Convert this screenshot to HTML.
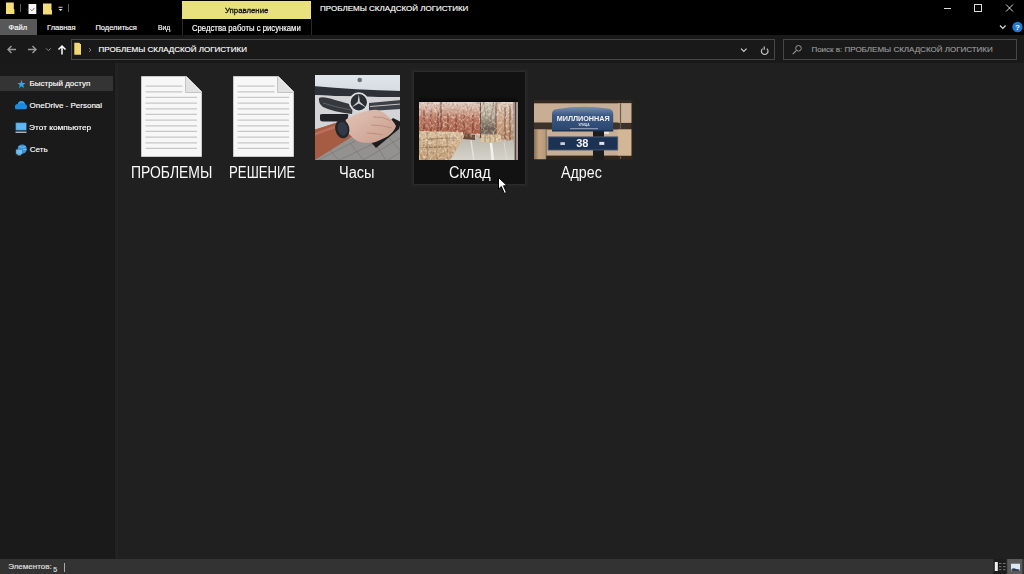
<!DOCTYPE html>
<html><head><meta charset="utf-8">
<style>
*{margin:0;padding:0;box-sizing:border-box}
html,body{width:1024px;height:574px;overflow:hidden;background:#202020;font-family:"Liberation Sans",sans-serif;color:#fff}
.a{position:absolute}
.t{position:absolute;white-space:nowrap;line-height:1;transform-origin:0 0}
svg{position:absolute;overflow:visible}
#title{left:0;top:0;width:1024px;height:35px;background:#000}
#addr{left:0;top:35px;width:1024px;height:28px;background:#191919}
#nav{left:0;top:63px;width:114px;height:496px;background:#1a1a1a}
#navsep{left:114px;top:63px;width:1px;height:496px;background:#171717}
#navsep2{left:115px;top:63px;width:2.5px;height:496px;background:#232323}
#content{left:118px;top:63px;width:906px;height:496px;background:#202020}
#status{left:0;top:559px;width:1024px;height:15px;background:#333}
.s8{font-size:8px}
.t{-webkit-text-stroke:0.15px currentColor}
.lbl{-webkit-text-stroke:0}
.lbl{font-size:16px;color:#fafafa;top:165.2px}
</style></head><body>
<div class="a" id="title"></div>
<div class="a" id="addr"></div>
<div class="a" id="nav"></div>
<div class="a" id="navsep"></div>
<div class="a" id="navsep2"></div>
<div class="a" id="content"></div>

<div class="a" id="status"></div>

<!-- quick access toolbar -->
<svg style="left:0;top:0" width="80" height="18">
  <path d="M6 2.5h7.8v6.5l0.6 0.3v4.7H6z" fill="#f4dc78"/>
  <rect x="20" y="4" width="1" height="8" fill="#5a5a5a"/>
  <rect x="28.5" y="4" width="7.8" height="10" fill="#f6f4f6"/>
  <path d="M30.3 9.3l1.6 1.6 2.6-3" stroke="#8a7862" stroke-width="1" fill="none"/>
  <path d="M43 3.5h8.5v6.5l0.5 0.3v4.2H43z" fill="#f4dc78"/>
  <rect x="58.5" y="6.8" width="4" height="1" fill="#ccc"/>
  <path d="M58.5 9h4l-2 2z" fill="#eee"/>
  <rect x="68" y="4" width="1" height="8" fill="#5a5a5a"/>
</svg>

<!-- Управление tab -->
<div class="a" style="left:182px;top:1px;width:129px;height:18px;background:#e8e17e"></div>
<div class="t s8" style="left:224.5px;top:6.8px;color:#111;transform:scaleX(0.975);-webkit-text-stroke:0.3px #111">Управление</div>
<div class="t s8" style="left:320px;top:5.3px;color:#fff">ПРОБЛЕМЫ СКЛАДСКОЙ ЛОГИСТИКИ</div>

<!-- window controls -->
<svg style="left:930px;top:0" width="94" height="35">
  <rect x="14" y="8" width="7" height="1" fill="#ddd"/>
  <rect x="44.5" y="4.5" width="7" height="7" fill="none" stroke="#ddd" stroke-width="1"/>
  <path d="M76 4.5l7 7M83 4.5l-7 7" stroke="#ddd" stroke-width="1"/>
  <path d="M70 25.5l2.8 2.8 2.8-2.8" stroke="#ddd" stroke-width="1.2" fill="none"/>
  <circle cx="87.5" cy="27" r="5.2" fill="#1f78d1"/>
  <text x="87.5" y="30" font-size="8" font-weight="bold" fill="#fff" text-anchor="middle" font-family="Liberation Sans">?</text>
</svg>

<!-- ribbon tabs -->
<div class="a" style="left:0;top:19px;width:37px;height:16px;background:#585858"></div>
<div class="t" style="left:8.6px;top:24.2px;font-size:7.5px;color:#fff">Файл</div>
<div class="t" style="left:47px;top:24.2px;font-size:7.5px;color:#fff">Главная</div>
<div class="t" style="left:95.4px;top:24.2px;font-size:7.5px;color:#fff">Поделиться</div>
<div class="t" style="left:158px;top:24.2px;font-size:7.5px;color:#fff;transform:scaleX(0.9)">Вид</div>
<div class="a" style="left:182px;top:19px;width:1px;height:16px;background:#2a2a2a"></div>
<div class="a" style="left:311px;top:19px;width:1px;height:16px;background:#2a2a2a"></div>
<div class="t" style="left:192px;top:24px;font-size:8.3px;color:#fff;transform:scaleX(0.93)">Средства работы с рисунками</div>

<!-- nav arrows -->
<svg style="left:0;top:35px" width="72" height="28">
  <path d="M8 14.5h8M11.5 11l-3.5 3.5 3.5 3.5" stroke="#9a9a9a" stroke-width="1.4" fill="none"/>
  <path d="M28 14.5h8M32.5 11l3.5 3.5-3.5 3.5" stroke="#9a9a9a" stroke-width="1.4" fill="none"/>
  <path d="M46 13.3l2.4 2.4 2.4-2.4" stroke="#8a8a8a" stroke-width="1" fill="none"/>
  <path d="M62 11v8.5M58.5 14.5l3.5-3.5 3.5 3.5" stroke="#fff" stroke-width="1.5" fill="none"/>
</svg>

<!-- address box -->
<div class="a" style="left:71px;top:39px;width:704px;height:21px;border:1px solid #474747"></div>
<svg style="left:71px;top:39px" width="704" height="21">
  <path d="M3.3 3.7h5l1 1.2h0.7v10.8H3.3z" fill="#f2d872"/>
  <path d="M18 9l2 2-2 2" stroke="#777" stroke-width="1" fill="none"/>
  <path d="M670 9.6l2.8 2.8 2.8-2.8" stroke="#ccc" stroke-width="1.2" fill="none"/>
  <path d="M691.6 9.6a3.3 3.3 0 1 0 4.2 0" stroke="#c4c4c4" stroke-width="1.2" fill="none"/>
  <path d="M693.2 7.5v3.2" stroke="#c4c4c4" stroke-width="1.2"/>
</svg>
<div class="t s8" style="left:98.6px;top:45.8px;color:#fff">ПРОБЛЕМЫ СКЛАДСКОЙ ЛОГИСТИКИ</div>
<!-- search box -->
<div class="a" style="left:783px;top:39px;width:234px;height:21px;border:1px solid #474747"></div>
<svg style="left:783px;top:39px" width="234" height="21">
  <circle cx="15.5" cy="9.3" r="2.8" stroke="#999" stroke-width="1" fill="none"/>
  <path d="M13.5 11.3l-3.8 3.8" stroke="#999" stroke-width="1.1"/>
</svg>
<div class="t s8" style="left:811.4px;top:45.6px;color:#9a9a9a">Поиск в: ПРОБЛЕМЫ СКЛАДСКОЙ ЛОГИСТИКИ</div>

<!-- nav pane -->
<div class="a" style="left:0;top:76px;width:113px;height:15px;background:#343434"></div>
<svg style="left:0;top:70px" width="30" height="90">
  <path d="M21.5 10l1.1 2.9 3 .1-2.4 1.9.9 3-2.6-1.7-2.6 1.7.9-3-2.4-1.9 3-.1z" fill="#2aa5ee"/>
  <g fill="#1c8ae0"><circle cx="17.6" cy="36.6" r="2.6"/><circle cx="21.4" cy="34.6" r="3.6"/><circle cx="24.3" cy="36.5" r="2.6"/><rect x="15" y="36.5" width="11.7" height="2.7" rx="1.3"/></g><path d="M18.5 33.5a3.6 3.6 0 0 1 6 0" stroke="#4fb0f0" stroke-width="1" fill="none"/>
  <rect x="15.8" y="52.8" width="10.6" height="7.4" fill="#5eb8ef" stroke="#2a5b80" stroke-width="0.6"/>
  <rect x="15.5" y="61.6" width="11" height="1.2" fill="#cfd8df"/>
  <circle cx="22.2" cy="79" r="4.6" fill="#3b95dc"/>
  <path d="M18.5 76.5c2 1 5 1 7.5 0M18 79.5h8.5" stroke="#8ccaf3" stroke-width="0.7" fill="none"/>
  <rect x="16" y="79.5" width="6.5" height="4.6" fill="#6cc2f2" stroke="#2d6a99" stroke-width="0.5"/>
  <rect x="17.5" y="84.3" width="3.5" height="1" fill="#9fd4f5"/>
</svg>
<div class="t s8" style="left:29.6px;top:79.9px">Быстрый доступ</div>
<div class="t s8" style="left:29.6px;top:101.9px">OneDrive - Personal</div>
<div class="t s8" style="left:29px;top:123.9px;transform:scaleX(1.04)">Этот компьютер</div>
<div class="t s8" style="left:29.8px;top:145.9px">Сеть</div>

<!-- doc icons -->
<svg style="left:141px;top:76px" width="62" height="82" id="doc1">
  <path d="M0.5 0.5H45.5L60.5 15.5V80.5H0.5Z" fill="#f7f7f7" stroke="#c9c9c9" stroke-width="1"/>
  <path d="M44.5 0.5V16.5H60.5" fill="#e2e2e2" stroke="#c4c4c4" stroke-width="1"/>
  <g stroke="#c8c8c8" stroke-width="1.35">
    <path d="M4.5 10.1H41.5M4.5 15.8H41.5"/>
    <path d="M4.5 21.4H56M4.5 27.1H56M4.5 32.8H56M4.5 38.4H56M4.5 44.1H56M4.5 49.8H56M4.5 55.4H56M4.5 61.1H56M4.5 66.8H56M4.5 72.4H56"/>
  </g>
</svg>
<svg style="left:232.5px;top:76px" width="62" height="82">
  <path d="M0.5 0.5H45.5L60.5 15.5V80.5H0.5Z" fill="#f7f7f7" stroke="#c9c9c9" stroke-width="1"/>
  <path d="M44.5 0.5V16.5H60.5" fill="#e2e2e2" stroke="#c4c4c4" stroke-width="1"/>
  <g stroke="#c8c8c8" stroke-width="1.35">
    <path d="M4.5 10.1H41.5M4.5 15.8H41.5"/>
    <path d="M4.5 21.4H56M4.5 27.1H56M4.5 32.8H56M4.5 38.4H56M4.5 44.1H56M4.5 49.8H56M4.5 55.4H56M4.5 61.1H56M4.5 66.8H56M4.5 72.4H56"/>
  </g>
</svg>

<!-- hover box -->
<div class="a" style="left:411px;top:69px;width:117px;height:118px;border:2px solid #242424"></div>
<div class="a" style="left:413px;top:71px;width:113px;height:114px;background:#121212;border:1px solid #2c2c2c"></div>

<div class="a" style="left:419px;top:96px;width:99px;height:6px;background:linear-gradient(#121212,#0a0a0a)"></div>
<!-- Часы image -->
<svg style="left:315px;top:75px" width="85" height="85" viewBox="0 0 85 85"><defs>
    <linearGradient id="hood" x1="0" y1="0" x2="0" y2="1">
      <stop offset="0" stop-color="#e2e7ec"/><stop offset="1" stop-color="#d2d9df"/>
    </linearGradient>
    <linearGradient id="hand" x1="0" y1="0" x2="1" y2="1">
      <stop offset="0" stop-color="#e2c4b6"/><stop offset="1" stop-color="#c99c8a"/>
    </linearGradient>
  <filter id="bl1" x="-5%" y="-5%" width="110%" height="110%"><feGaussianBlur stdDeviation="0.7"/></filter><clipPath id="bl1c"><rect width="85" height="85"/></clipPath></defs><g clip-path="url(#bl1c)"><g filter="url(#bl1)">
  <rect x="-2" y="-2" width="89" height="89" fill="#939290"/>
  <rect x="-2" y="-2" width="89" height="24" fill="url(#hood)"/>
  <circle cx="44.7" cy="5" r="2.3" fill="#6a7078"/>
  <path d="M-2 11 Q40 15 87 16 V22 Q40 22 -2 20Z" fill="#2e3239"/>
  <path d="M-2 20 Q40 22 87 22 V54 H-2Z" fill="#d4d4d6"/>
  <path d="M4 23 Q8 21 20 25 L38 30 L37 39 Q18 37 8 32 Q3 28 4 23Z" fill="#34373e"/>
  <path d="M8 28 Q20 32 36 35" stroke="#6a6c70" stroke-width="0.8" fill="none"/>
  <path d="M54 28 L86 25 V34 L54 36Z" fill="#3c3f46"/>
  <path d="M55 31.5 L86 29" stroke="#c4c4c6" stroke-width="1" fill="none"/>
  <circle cx="43.8" cy="27.3" r="9.1" fill="#2c2f35" stroke="#dcdee0" stroke-width="1.8"/>
  <path d="M43.8 19 L44.9 26.8 L51.2 32.6 L43.8 28.4 L36.4 32.6 L42.7 26.8Z" fill="#cfd1d3"/>
  <path d="M5 40 Q5 39 8 39 H32 Q34 39 33 42 L32 46.5 H8 Q5 46.5 5 44Z" fill="#202227"/>
  <path d="M-2 54 L1.6 84 L34.7 64.5 L58 69.5 L84 51 L87 50 V87 H-2Z" fill="#939290"/>
  <path d="M0 87 L40 66 M20 87 L60 68 M45 87 L87 62 M70 87 L87 76 M15 75 L25 87 M35 68 L50 87 M60 68 L72 87 M72 60 L87 78" stroke="#7e7d7b" stroke-width="0.9"/>
  <path d="M55 66 L61 73 L84 54 L86 47 L78 43Z" fill="#1c1c1e"/>
  <path d="M-2 55 Q8 52 20 48 L31 50 L38 61 L1.6 84 L-2 86Z" fill="#a55b43"/>
  <path d="M-2 60 Q8 56 20 52" stroke="#b9715b" stroke-width="2.5" fill="none"/>
  <path d="M30.6 44.7 Q38 40 49.6 36.4 Q56 34.5 61.2 34.7 Q68 36 72.8 41.4 Q79 46 81 51.3 Q79 57 72.8 61.2 Q64 66 57.9 67.8 H48 Q40 66 36.4 61.2 Q32 58 31.4 53Z" fill="url(#hand)"/>
  <path d="M58 42 Q68 41 76 46 M56 50 Q66 50 77 53 M52 58 Q60 58 68 60" stroke="#bd9080" stroke-width="1" fill="none"/>
  <ellipse cx="27.3" cy="53.8" rx="7" ry="9.6" fill="#23252b" transform="rotate(-12 27.3 53.8)"/>
  <ellipse cx="27.6" cy="53.8" rx="5" ry="7" fill="#333845" transform="rotate(-12 27.3 53.8)"/>
</g></g></svg>

<!-- Склад image -->
<svg style="left:419px;top:102px" width="99" height="58" viewBox="0 0 99 58"><defs>
    <linearGradient id="fl" x1="0" y1="0" x2="0" y2="1">
      <stop offset="0" stop-color="#bcb8ad"/><stop offset="1" stop-color="#d8d5cd"/>
    </linearGradient>
    <linearGradient id="shL" x1="0" y1="0" x2="0" y2="1">
      <stop offset="0" stop-color="#e4d8d0"/><stop offset="0.25" stop-color="#d6b2a0"/><stop offset="0.6" stop-color="#bb735c"/><stop offset="1" stop-color="#a85a44"/>
    </linearGradient>
    <linearGradient id="shR" x1="0" y1="0" x2="0" y2="1">
      <stop offset="0" stop-color="#e2d2c4"/><stop offset="0.5" stop-color="#cfa484"/><stop offset="1" stop-color="#b98660"/>
    </linearGradient>
    <linearGradient id="cor" x1="0" y1="0" x2="0" y2="1">
      <stop offset="0" stop-color="#dcd6c4"/><stop offset="0.4" stop-color="#b8ae9c"/><stop offset="0.75" stop-color="#6a5e52"/><stop offset="1" stop-color="#7a6e60"/>
    </linearGradient>
    <linearGradient id="box" x1="0" y1="0" x2="0" y2="1">
      <stop offset="0" stop-color="#dcc5a2"/><stop offset="1" stop-color="#c29c72"/>
    </linearGradient>
    <filter id="nz" x="0" y="0" width="100%" height="100%">
      <feTurbulence type="fractalNoise" baseFrequency="0.45 0.35" numOctaves="2" seed="7"/>
      <feColorMatrix type="matrix" values="0 0 0 0 1  0 0 0 0 0.96  0 0 0 0 0.92  2.4 0 0 0 -1.1"/>
    </filter>
    <filter id="nz2" x="0" y="0" width="100%" height="100%">
      <feTurbulence type="fractalNoise" baseFrequency="0.5 0.4" numOctaves="2" seed="11"/>
      <feColorMatrix type="matrix" values="0 0 0 0 0.3  0 0 0 0 0.15  0 0 0 0 0.1  0 2.6 0 0 -1.2"/>
    </filter>
  <clipPath id="shc"><path d="M-2 -2 H95 V40 L44 35 L30 60 H-2Z"/></clipPath>
  <filter id="bl2" x="-5%" y="-5%" width="110%" height="110%"><feGaussianBlur stdDeviation="0.5"/></filter><clipPath id="bl2c"><rect width="99" height="58"/></clipPath></defs><g clip-path="url(#bl2c)"><g filter="url(#bl2)">
  <rect x="-2" y="-2" width="103" height="62" fill="#c7b2a2"/>
  <path d="M-2 -2 H62 V32 H-2Z" fill="url(#shL)"/>
  <path d="M61 -2 H78 V36 H61Z" fill="url(#cor)"/>
  <path d="M77 -2 H95 V40 H77Z" fill="url(#shR)"/>
  <rect x="94" y="-2" width="7" height="62" fill="#aa9c96"/>
  <path d="M96.5 -2 V60" stroke="#4e4440" stroke-width="1.2"/>
  <path d="M5 8V31M12 9V31M19 10V31M29 11V31M37 12V31M45 13V31M54 13V32" stroke="#6a3024" stroke-width="1.1" opacity="0.75"/>
  <path d="M22 -2V34" stroke="#4a3028" stroke-width="0.9"/>
  <path d="M61.5 -2V36M77 -2V36M86 6V40M91 4V40" stroke="#5a4238" stroke-width="0.9"/>
  <path d="M64 -2 L68 20 M75 -2 L71 20" stroke="#8a8272" stroke-width="0.8"/>
  <path d="M28 60 L44 35 L95 38 L95 60Z" fill="url(#fl)"/>
  <path d="M72 41 L74 60" stroke="#f2f1ec" stroke-width="2.6"/>
  <path d="M52 38 L55 60" stroke="#e6e4de" stroke-width="1.3"/>
  <path d="M85 40 L88 60" stroke="#dcd9d1" stroke-width="1"/>
  <rect x="62" y="32.5" width="20" height="7.5" fill="#dcc6a0"/>
  <path d="M66 32.5V40M71 32.5V40M76 32.5V40" stroke="#9a8060" stroke-width="0.8"/>
  <path d="M44 31 L56 33 L56 38 L44 37Z" fill="#6a4a3a"/>
  <path d="M-2 29 L44 30 L45 35 L30 60 H-2Z" fill="url(#box)"/>
  <path d="M0 38 Q15 36 38 36 M0 46 Q12 44 32 45 M8 30 V60 M18 31 V60 M28 32 V50" stroke="#8a6444" stroke-width="0.9" opacity="0.6"/>
  <g clip-path="url(#shc)">
  <rect x="-2" y="-2" width="99" height="62" filter="url(#nz)" opacity="0.65"/>
  <rect x="-2" y="-2" width="99" height="62" filter="url(#nz2)" opacity="0.55"/>
  </g>
</g></g></svg>

<!-- Адрес image -->
<svg style="left:534px;top:100.3px" width="99" height="59.4" viewBox="0 0 99 59.4"><defs>
  <linearGradient id="sg" x1="0" y1="0" x2="0" y2="1">
    <stop offset="0" stop-color="#7890b2"/><stop offset="0.35" stop-color="#3d5a85"/><stop offset="1" stop-color="#2a456e"/>
  </linearGradient>
  <linearGradient id="lb" x1="0" y1="0" x2="1" y2="0">
    <stop offset="0" stop-color="#8a7058"/><stop offset="0.4" stop-color="#c4a684"/><stop offset="0.9" stop-color="#b89a7a"/><stop offset="1" stop-color="#5a4838"/>
  </linearGradient>
  <filter id="bl3" x="-5%" y="-5%" width="110%" height="110%"><feGaussianBlur stdDeviation="0.45"/></filter><clipPath id="bl3c"><rect width="99" height="59.4"/></clipPath></defs><g clip-path="url(#bl3c)"><g filter="url(#bl3)">
  <rect x="-2" y="-2" width="103" height="64" fill="#c8ae94"/>
  <rect x="-2" y="-2" width="103" height="5.3" fill="#332a24"/>
  <rect x="-2" y="22.5" width="103" height="7" fill="#3a3029"/>
  <rect x="-2" y="55.6" width="103" height="6" fill="#30271f"/>
  <rect x="0" y="29.5" width="12.5" height="30" fill="url(#lb)"/>
  <rect x="84" y="3.3" width="14" height="19.5" fill="#cbb39c"/>
  <path d="M86.5 3.3 V59" stroke="#6e5a48" stroke-width="1.2"/>
  <rect x="83.7" y="29.5" width="14" height="26" fill="#d2b696"/>
  <rect x="97.5" y="-2" width="4" height="64" fill="#2a221c"/>
  <rect x="59" y="29" width="11" height="9" fill="#1c1a1a"/>
  <rect x="59" y="49" width="11" height="11" fill="#1c1a1a"/>
  <rect x="70.3" y="31.2" width="4.5" height="2.8" fill="#e8e4dc"/>
  <path d="M18 31 V14 Q18 10 22 9.2 Q50 4.5 75 8.8 Q79.2 9.6 79.2 14 V31Z" fill="url(#sg)"/>
  <path d="M18 30.8 H79.2" stroke="#1d2f4c" stroke-width="1.2"/>
  <text x="49.2" y="20.9" font-size="7.6" font-weight="bold" fill="#f4f4f4" text-anchor="middle" font-family="Liberation Sans" textLength="53" lengthAdjust="spacingAndGlyphs">МИЛЛИОННАЯ</text>
  <text x="50" y="26.4" font-size="3.2" font-weight="bold" fill="#d8e0ea" text-anchor="middle" font-family="Liberation Sans">УЛИЦА</text>
  <rect x="36" y="28.2" width="28" height="1" fill="#9aaac2"/>
  <rect x="14.2" y="36.9" width="69.5" height="13.1" fill="#1f3152"/>
  <rect x="14.2" y="36.9" width="69.5" height="13.1" fill="none" stroke="#4a5a74" stroke-width="0.9"/>
  <text x="48.3" y="47.4" font-size="11" font-weight="bold" fill="#f4f4f4" text-anchor="middle" font-family="Liberation Sans">38</text>
  <rect x="26.4" y="42.2" width="4.5" height="2.8" fill="#c8d0dc"/>
  <rect x="65.3" y="41.9" width="5" height="3" fill="#dde2ea"/>
</g></g></svg>

<!-- labels -->
<div class="t lbl" style="left:130.7px;transform:scaleX(0.87)">ПРОБЛЕМЫ</div>
<div class="t lbl" style="left:229px;transform:scaleX(0.826)">РЕШЕНИЕ</div>
<div class="t lbl" style="left:339.3px;transform:scaleX(0.91)">Часы</div>
<div class="t lbl" style="left:448.5px;transform:scaleX(0.9)">Склад</div>
<div class="t lbl" style="left:560.7px;transform:scaleX(0.89)">Адрес</div>

<!-- cursor -->
<svg style="left:498px;top:176.8px" width="12" height="18">
  <path d="M0.5 0.5V12.2L3.3 9.5L6.4 16.4L8.5 15.6L5.5 8.8H9.2Z" fill="#fff" stroke="#000" stroke-width="1"/>
</svg>

<!-- status -->
<div class="t s8" style="left:8.2px;top:563.4px;color:#e0e0e0">Элементов:</div>
<div class="t" style="left:53.3px;top:565.8px;font-size:7px;color:#e0e0e0">5</div>
<div class="a" style="left:64px;top:563px;width:1px;height:8.5px;background:#aaa"></div>
<svg style="left:990px;top:559px" width="34" height="15">
  <rect x="3.5" y="0" width="13" height="15" fill="#1c1c1c"/>
  <rect x="4.8" y="3" width="3" height="9" fill="#f0f0f0"/>
  <path d="M9 4.5h2.5M13 4.5h2.5M9 7.7h2.5M13 7.7h2.5M9 10.7h2.5M13 10.7h2.5" stroke="#777" stroke-width="1"/>
  <rect x="17.3" y="0" width="15" height="15" fill="#5a5a5a"/>
  <rect x="21" y="4.7" width="9" height="7.3" fill="#dfe9f2"/>
  <path d="M21.5 10 Q24 8.5 26 10 L29.5 10.5 V12 H21.5Z" fill="#2e3f52"/>
</svg>
</body></html>
